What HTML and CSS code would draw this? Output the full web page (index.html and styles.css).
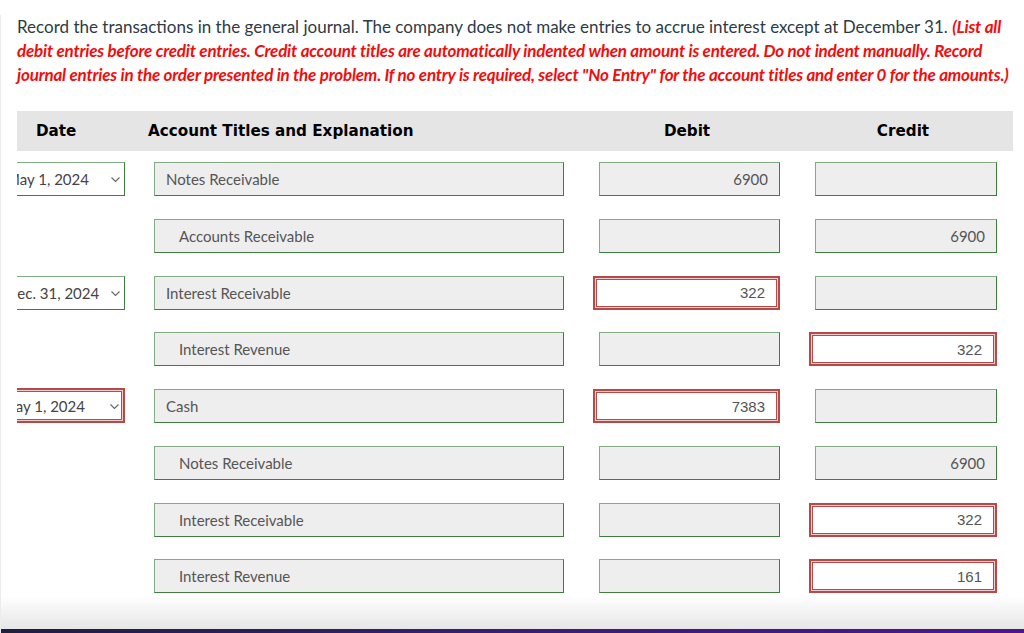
FILE: index.html
```html
<!DOCTYPE html>
<html lang="en">
<head>
    <meta charset="UTF-8">
    <title>General Journal</title>
    <link rel="stylesheet" href="styles.css">
</head>
<body>
    <div class="page">
        <p class="question">
            Record the transactions in the general journal. The company does not make entries to accrue interest except at December 31.
            <em class="note">(List all debit entries before credit entries. Credit account titles are automatically indented when amount is entered. Do not indent manually. Record journal entries in the order presented in the problem. If no entry is required, select "No Entry" for the account titles and enter 0 for the amounts.)</em>
        </p>

        <div class="journal">
            <div class="journal-head">
                <div class="th th-date">Date</div>
                <div class="th th-account">Account Titles and Explanation</div>
                <div class="th th-debit">Debit</div>
                <div class="th th-credit">Credit</div>
            </div>

            <!-- entry 1 -->
            <div class="row">
                <div class="cell"><div class="date-select">May 1, 2024<span class="chev"><svg width="9" height="5" viewBox="0 0 9 5"><path d="M0.5 0.5 L4.5 4.5 L8.5 0.5" fill="none" stroke="#666" stroke-width="1.1"/></svg></span></div></div>
                <div class="cell"><div class="field account">Notes Receivable</div></div>
                <div class="cell"><div class="field amount debit">6900</div></div>
                <div class="cell"><div class="field amount credit"></div></div>
            </div>
            <div class="row">
                <div class="cell"></div>
                <div class="cell"><div class="field account indent">Accounts Receivable</div></div>
                <div class="cell"><div class="field amount debit"></div></div>
                <div class="cell"><div class="field amount credit">6900</div></div>
            </div>

            <!-- entry 2 -->
            <div class="row">
                <div class="cell"><div class="date-select">Dec. 31, 2024<span class="chev"><svg width="9" height="5" viewBox="0 0 9 5"><path d="M0.5 0.5 L4.5 4.5 L8.5 0.5" fill="none" stroke="#666" stroke-width="1.1"/></svg></span></div></div>
                <div class="cell"><div class="field account">Interest Receivable</div></div>
                <div class="cell"><div class="field amount debit wrong">322</div></div>
                <div class="cell"><div class="field amount credit"></div></div>
            </div>
            <div class="row">
                <div class="cell"></div>
                <div class="cell"><div class="field account indent">Interest Revenue</div></div>
                <div class="cell"><div class="field amount debit"></div></div>
                <div class="cell"><div class="field amount credit wrong">322</div></div>
            </div>

            <!-- entry 3 -->
            <div class="row">
                <div class="cell"><div class="date-select wrong">May 1, 2024<span class="chev"><svg width="9" height="5" viewBox="0 0 9 5"><path d="M0.5 0.5 L4.5 4.5 L8.5 0.5" fill="none" stroke="#666" stroke-width="1.1"/></svg></span></div></div>
                <div class="cell"><div class="field account">Cash</div></div>
                <div class="cell"><div class="field amount debit wrong">7383</div></div>
                <div class="cell"><div class="field amount credit"></div></div>
            </div>
            <div class="row">
                <div class="cell"></div>
                <div class="cell"><div class="field account indent">Notes Receivable</div></div>
                <div class="cell"><div class="field amount debit"></div></div>
                <div class="cell"><div class="field amount credit">6900</div></div>
            </div>
            <div class="row">
                <div class="cell"></div>
                <div class="cell"><div class="field account indent">Interest Receivable</div></div>
                <div class="cell"><div class="field amount debit"></div></div>
                <div class="cell"><div class="field amount credit wrong">322</div></div>
            </div>
            <div class="row">
                <div class="cell"></div>
                <div class="cell"><div class="field account indent">Interest Revenue</div></div>
                <div class="cell"><div class="field amount debit"></div></div>
                <div class="cell"><div class="field amount credit wrong">161</div></div>
            </div>
        </div>

        <div class="fade"></div>
        <div class="bottom-bar"></div>
    </div>
</body>
</html>
```

FILE: styles.css
```css
body {
    margin: 0;
    padding: 0;
    background-color: #ffffff;
    font-family: Lato, "Open Sans", sans-serif;
    overflow: hidden;
}

.page {
    border-left: 1px solid #ececec;
}

.question {
    margin: 15px 12px 0 16px;
    font-size: 17px;
    line-height: 24px;
    color: #2d3b45;
}

.note {
    color: #f20d0d;
    font-weight: bold;
    letter-spacing: -0.2px;
}

.journal {
    margin: 24px 11px 0 16px;
    overflow: hidden;
}

.journal-head {
    display: grid;
    grid-template-columns: 137px 445px 216px 197px;
    height: 40px;
    align-items: center;
    background-color: #e5e5e5;
}

.th {
    font-family: "DejaVu Sans", Verdana, sans-serif;
    font-weight: bold;
    font-size: 15.2px;
    color: #000;
}

.th-date {
    padding-left: 19px;
}

.th-account {
    margin-left: -6px;
}

.th-debit {
    text-align: center;
    padding-right: 40px;
}

.th-credit {
    text-align: center;
    padding-right: 21px;
}

.row {
    display: grid;
    grid-template-columns: 137px 445px 216px 197px;
    height: 34px;
    margin-top: 22.75px;
}

.journal-head + .row {
    margin-top: 11px;
}

.cell {
    display: flex;
    align-items: stretch;
}

.date-select {
    position: relative;
    margin-left: -12px;
    width: 120px;
    box-sizing: border-box;
    display: flex;
    align-items: center;
    font-size: 15px;
    color: #444;
    background-color: #fff;
    border: 1px solid #3d7d3d;
    border-top-color: #84ac84;
    border-left-color: #84ac84;
}

.date-select .chev {
    position: absolute;
    right: 4px;
    top: 13px;
    line-height: 0;
}

.date-select.wrong {
    margin-left: -17px;
    width: 125px;
    margin-top: -1px;
    height: 35px;
    border: 2px solid #b54a48;
    box-shadow: inset 0 0 0 1px #f1cccc, inset 0 0 0 2px #b54a48;
}

.field {
    box-sizing: border-box;
    height: 34px;
    display: flex;
    align-items: center;
    font-size: 15px;
    color: #555;
    background-color: #eeeeee;
    border: 1px solid #3d7d3d;
    border-top-color: #84ac84;
    border-left-color: #84ac84;
}

.account {
    width: 410px;
    padding-left: 11px;
}

.account.indent {
    padding-left: 24px;
}

.amount {
    justify-content: flex-end;
    padding-right: 11px;
}

.debit {
    width: 181px;
}

.credit {
    width: 182px;
}

.amount.wrong {
    margin-left: -6px;
    font-family: "Liberation Sans", Arial, sans-serif;
    background-color: #fff;
    border: 2px solid #b54a48;
    box-shadow: inset 0 0 0 1px #f1cccc, inset 0 0 0 2px #b54a48;
    padding-right: 13px;
}

.debit.wrong {
    width: 187px;
}

.credit.wrong {
    width: 188px;
}

.fade {
    height: 33px;
    margin-top: 3px;
    background: linear-gradient(#ffffff, #e6e6e6);
}

.bottom-bar {
    height: 4px;
    background: linear-gradient(to right, #1e1e40, #35206a 45%, #4a168c);
}
```
